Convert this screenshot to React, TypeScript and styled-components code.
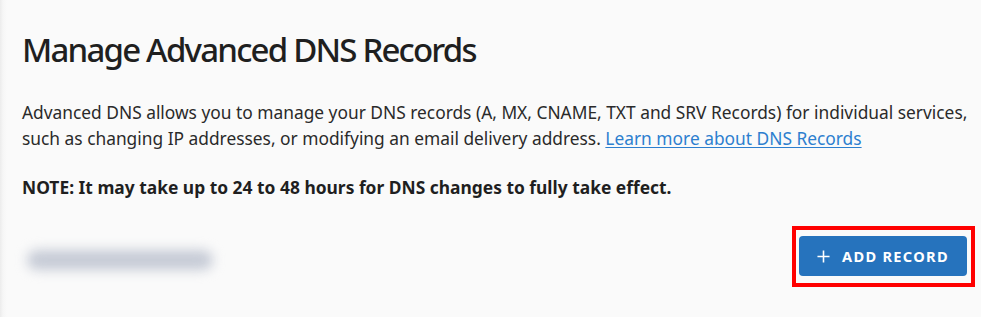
import styled, { createGlobalStyle } from 'styled-components';

const GlobalStyle = createGlobalStyle`
  html, body {
    margin: 0;
    padding: 0;
    background: #fafafa;
  }
  body {
    font-family: "Noto Sans", "Open Sans", sans-serif;
    color: #222;
  }
`;

const Page = styled.div`
  min-height: 317px;
  box-sizing: border-box;
  padding: 24px 6px 0 22px;
  background: linear-gradient(to right, #ececec 0, #f6f6f6 3px, #fafafa 7px);
`;

const Title = styled.h1`
  margin: 0 0 23px;
  font-size: 33px;
  font-weight: 500;
  line-height: 52px;
  letter-spacing: -1.8px;
  color: #1f1f1f;
`;

const Description = styled.p`
  margin: 0 0 23px;
  font-size: 17.35px;
  line-height: 26px;
  color: #2a2a2a;
`;

const Link = styled.a`
  color: #2d7fcf;
  text-decoration: underline;
  text-underline-offset: 2px;
`;

const Note = styled.p`
  margin: 0;
  font-size: 17.4px;
  line-height: 26px;
  font-weight: 700;
  color: #1f1f1f;
`;

const Toolbar = styled.div`
  display: flex;
  justify-content: space-between;
  align-items: center;
  margin-top: 26px;
`;

const BlurredLabel = styled.div`
  width: 186px;
  height: 20px;
  margin: 6px 0 0 5px;
  border-radius: 10px;
  background: #c6cbd6;
  filter: blur(6px);
`;

const Highlight = styled.div`
  border: 4px solid #ff0000;
  padding: 6px 4px 7px 3px;
`;

const AddButton = styled.button`
  display: flex;
  align-items: center;
  gap: 12px;
  height: 40px;
  width: 168px;
  padding: 0 0 0 18px;
  box-sizing: border-box;
  border: none;
  border-radius: 4px;
  background: #2673bd;
  color: #fff;
  font-family: "Noto Sans", "Open Sans", sans-serif;
  font-size: 14.6px;
  font-weight: 700;
  letter-spacing: 1.3px;
  cursor: pointer;
`;

const PlusIcon = () => (
  <svg width="13" height="13" viewBox="0 0 14 14" fill="none" stroke="#fff" strokeWidth="1.7">
    <path d="M7 0.5v13M0.5 7h13" />
  </svg>
);

export default function App() {
  return (
    <>
      <GlobalStyle />
      <Page>
        <Title>Manage Advanced DNS Records</Title>
        <Description>
          Advanced DNS allows you to manage your DNS records (A, MX, CNAME, TXT and SRV Records) for individual services,
          such as changing IP addresses, or modifying an email delivery address.{' '}
          <Link href="#">Learn more about DNS Records</Link>
        </Description>
        <Note>NOTE: It may take up to 24 to 48 hours for DNS changes to fully take effect.</Note>
        <Toolbar>
          <BlurredLabel />
          <Highlight>
            <AddButton>
              <PlusIcon />
              ADD RECORD
            </AddButton>
          </Highlight>
        </Toolbar>
      </Page>
    </>
  );
}
